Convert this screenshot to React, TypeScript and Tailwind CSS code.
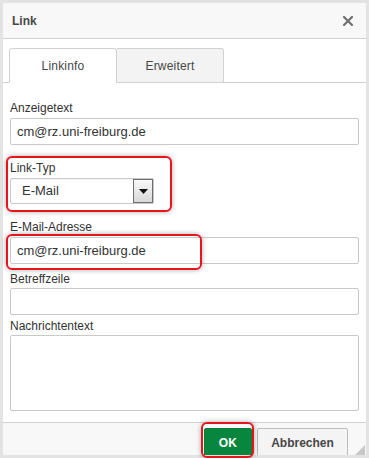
import React from 'react';

const Field = ({ label, className = '', children }: { label: string; className?: string; children: React.ReactNode }) => (
  <div className={className}>
    <div className="h-[16px] leading-[16px] text-[12px] text-[#333]">{label}</div>
    {children}
  </div>
);

const Highlight = ({ className }: { className: string }) => (
  <div className={`pointer-events-none absolute rounded-[6px] border-2 border-[#e8141b] shadow-[0_0_5px_rgba(0,0,0,0.35)] ${className}`} />
);

export default function App() {
  return (
    <div className="relative h-[458px] w-[369px] bg-[#e3e3e3] p-[3px] font-['Liberation_Sans',Arial,sans-serif]">
      <div className="relative flex h-full flex-col overflow-hidden bg-white">
        {/* Title bar */}
        <div className="flex h-[36px] shrink-0 items-center justify-between border-b border-[#d1d1d1] bg-[#f8f8f8] pl-[9px] pr-[13px]">
          <span className="text-[12px] font-bold text-[#474747]">Link</span>
          <svg width="10" height="10" viewBox="0 0 10 10" className="mt-[1px]">
            <path d="M1 1 L9 9 M9 1 L1 9" stroke="#707070" strokeWidth="2.2" strokeLinecap="square" />
          </svg>
        </div>

        {/* Tabs */}
        <div className="flex shrink-0 items-end border-b border-[#d1d1d1] pl-[6px] pt-[9px]">
          <div className="-mb-px flex h-[35px] w-[108px] items-center justify-center rounded-t-[3px] border border-b-white border-[#d1d1d1] bg-white text-[12px] tracking-[0.2px] text-[#474747]">
            Linkinfo
          </div>
          <div className="flex h-[34px] w-[107px] items-center justify-center rounded-tr-[3px] border border-l-0 border-b-0 border-[#d1d1d1] bg-[#f3f3f3] text-[12px] tracking-[0.2px] text-[#474747]">
            Erweitert
          </div>
        </div>

        {/* Form */}
        <div className="flex flex-col px-[7px]">
          <Field label="Anzeigetext" className="mt-[17px]">
            <div className="mt-[2px] flex h-[27px] items-center rounded-[2px] border border-[#c9c9c9] px-[6px] text-[13px] text-[#333]">
              cm@rz.uni-freiburg.de
            </div>
          </Field>

          <Field label="Link-Typ" className="mt-[15px]">
            <div className="mt-[2px] flex h-[26px] w-[144px] items-stretch rounded-[2px] border border-[#c9c9c9] shadow-[inset_0_1px_1px_rgba(0,0,0,0.05)]">
              <div className="flex flex-1 items-center pl-[11px] text-[13px] text-[#333]">E-Mail</div>
              <div className="flex w-[20px] items-center justify-center border border-[#6e6e6e] bg-gradient-to-b from-[#fafafa] to-[#d8d8d8]">
                <svg width="9" height="5" viewBox="0 0 9 5">
                  <path d="M0 0 H9 L4.5 5 Z" fill="#111" />
                </svg>
              </div>
            </div>
          </Field>

          <Field label="E-Mail-Adresse" className="mt-[15px]">
            <div className="mt-[2px] flex h-[27px] items-center rounded-[2px] border border-[#c9c9c9] px-[6px] text-[13px] text-[#333]">
              cm@rz.uni-freiburg.de
            </div>
          </Field>

          <Field label="Betreffzeile" className="mt-[7px]">
            <div className="mt-[1px] h-[27px] rounded-[2px] border border-[#c9c9c9]" />
          </Field>

          <Field label="Nachrichtentext" className="mt-[3px]">
            <div className="mt-[1px] h-[76px] rounded-[2px] border border-[#c9c9c9]" />
          </Field>
        </div>

        <div className="flex-1" />

        {/* Footer */}
        <div className="flex h-[33px] shrink-0 items-start justify-end gap-[5px] border-t border-[#d1d1d1] bg-[#f8f8f8] pr-[18px] pt-[5px]">
          <div className="flex h-[30px] w-[48px] items-center justify-center rounded-[2px] border border-[#0b7a3d] bg-[#09863e] text-[12px] font-bold tracking-[0.3px] text-white">
            OK
          </div>
          <div className="flex h-[30px] w-[91px] items-center justify-center rounded-[2px] border border-[#bcbcbc] bg-[#f4f4f4] text-[12px] font-bold text-[#474747]">
            Abbrechen
          </div>
        </div>

        <svg width="10" height="10" viewBox="0 0 10 10" className="absolute bottom-0 right-[1px]">
          <path d="M10 0 L10 10 L0 10 Z" fill="#c8c8c8" />
        </svg>
      </div>

      {/* Annotation boxes */}
      <Highlight className="left-[6px] top-[156px] h-[56px] w-[166px]" />
      <Highlight className="left-[6px] top-[234px] h-[36px] w-[196px]" />
      <Highlight className="left-[201px] top-[422px] h-[36px] w-[53px]" />
    </div>
  );
}
